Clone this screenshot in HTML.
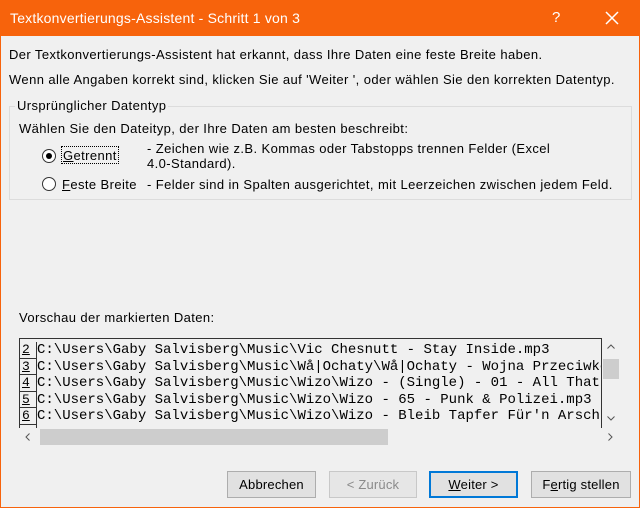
<!DOCTYPE html>
<html><head><meta charset="utf-8"><style>
*{margin:0;padding:0;box-sizing:border-box}
body{width:640px;height:508px;overflow:hidden;background:#f0f0f0;font-family:"Liberation Sans",sans-serif;font-size:13px;letter-spacing:.4px;color:#000;position:relative}
.frame{position:absolute;left:0;top:0;width:640px;height:508px;border:1px solid #f7630c;border-top:none}
.title{position:absolute;left:0;top:0;width:640px;height:36px;background:#f7630c;color:#fff;font-size:14px;letter-spacing:.2px}
.title .t{position:absolute;left:10px;top:10px}
.title .q{position:absolute;left:552px;top:9px;font-size:15px}
.a{position:absolute;white-space:nowrap}
.group{position:absolute;left:9px;top:106px;width:623px;height:94px;border:1px solid #dcdcdc}
.leg{position:absolute;left:15px;top:98px;background:#f0f0f0;padding:0 2px}
.radio{position:absolute;width:14px;height:14px;border:1px solid #333;border-radius:50%;background:#fff}
.radio.on::after{content:"";position:absolute;left:3px;top:3px;width:6px;height:6px;border-radius:50%;background:#000}
.prev{position:absolute;left:19px;top:338px;width:583px;height:90px;border:1px solid #333;border-bottom:none;overflow:hidden;background:#f0f0f0;letter-spacing:0}
.row{height:16.5px;position:relative;font-family:"Liberation Mono",monospace;font-size:14px;line-height:16px;white-space:nowrap}
.row .n{position:absolute;left:0;top:0;width:17px;height:16.5px;border-right:1px solid #333;border-bottom:1px solid #333;padding-left:2px;text-decoration:underline;font-size:13px}
.row .c{position:absolute;left:17px;top:0}
.vs{position:absolute;left:602px;top:338px;width:18px;height:90px;background:#f0f0f0}
.hs{position:absolute;left:19px;top:428px;width:601px;height:18px;background:#f0f0f0}
.btn{position:absolute;top:471px;height:27px;border:1px solid #adadad;background:#e1e1e1;text-align:center;line-height:25px;font-size:13px;letter-spacing:.2px}
</style></head><body>
<div class="title"><span class="t">Textkonvertierungs-Assistent - Schritt 1 von 3</span><span class="q">?</span>
<svg style="position:absolute;left:605px;top:11px" width="14" height="14"><path d="M1 1L13 13M13 1L1 13" stroke="#fff" stroke-width="1.5"/></svg></div>
<div class="frame"></div>
<div class="a" style="left:9px;top:47px">Der Textkonvertierungs-Assistent hat erkannt, dass Ihre Daten eine feste Breite haben.</div>
<div class="a" style="left:9px;top:72px">Wenn alle Angaben korrekt sind, klicken Sie auf 'Weiter ', oder wählen Sie den korrekten Datentyp.</div>
<div class="group"></div>
<div class="a leg">Ursprünglicher Datentyp</div>
<div class="a" style="left:19px;top:121px">Wählen Sie den Dateityp, der Ihre Daten am besten beschreibt:</div>
<div class="radio on" style="left:42px;top:149px"></div>
<div class="a" style="left:61px;top:146px;height:18px;border:1px dotted #000;padding:1px 1px"><u>G</u>etrennt</div>
<div class="a" style="left:147px;top:141px">- Zeichen wie z.B. Kommas oder Tabstopps trennen Felder (Excel</div>
<div class="a" style="left:147px;top:156px">4.0-Standard).</div>
<div class="radio" style="left:42px;top:177px"></div>
<div class="a" style="left:62px;top:177px"><u>F</u>este Breite</div>
<div class="a" style="left:147px;top:177px">- Felder sind in Spalten ausgerichtet, mit Leerzeichen zwischen jedem Feld.</div>
<div class="a" style="left:19px;top:310px">Vorschau der markierten Daten:</div>
<div class="prev">
<div class="row" style="margin-top:3px"><span class="n">2</span><span class="c">C:\Users\Gaby Salvisberg\Music\Vic Chesnutt - Stay Inside.mp3</span></div>
<div class="row"><span class="n">3</span><span class="c">C:\Users\Gaby Salvisberg\Music\Wå|Ochaty\Wå|Ochaty - Wojna Przeciwko</span></div>
<div class="row"><span class="n">4</span><span class="c">C:\Users\Gaby Salvisberg\Music\Wizo\Wizo - (Single) - 01 - All That</span></div>
<div class="row"><span class="n">5</span><span class="c">C:\Users\Gaby Salvisberg\Music\Wizo\Wizo - 65 - Punk &amp; Polizei.mp3</span></div>
<div class="row"><span class="n">6</span><span class="c">C:\Users\Gaby Salvisberg\Music\Wizo\Wizo - Bleib Tapfer  Für'n Arsch</span></div>
<div class="row"><span class="n"></span></div>
</div>
<div class="vs"><svg style="position:absolute;left:5px;top:6px" width="8" height="5"><path d="M0.5 4.5L4 1L7.5 4.5" stroke="#555" fill="none"/></svg><div style="position:absolute;left:1px;top:21px;width:16px;height:20px;background:#cdcdcd"></div><svg style="position:absolute;left:5px;top:78px" width="8" height="5"><path d="M0.5 0.5L4 4L7.5 0.5" stroke="#555" fill="none"/></svg></div>
<div class="hs"><svg style="position:absolute;left:6px;top:5px" width="5" height="8"><path d="M4.5 0.5L1 4L4.5 7.5" stroke="#555" fill="none"/></svg><div style="position:absolute;left:21px;top:1px;width:348px;height:16px;background:#cdcdcd"></div><svg style="position:absolute;left:589px;top:5px" width="5" height="8"><path d="M0.5 0.5L4 4L0.5 7.5" stroke="#555" fill="none"/></svg></div>
<div class="btn" style="left:227px;width:89px">Abbrechen</div>
<div class="btn" style="left:329px;width:88px;color:#8a8a8a;border-color:#c8c8c8;background:#e6e6e6">&lt; Zurück</div>
<div class="btn" style="left:429px;width:89px;border:2px solid #0078d7;line-height:23px"><u>W</u>eiter &gt;</div>
<div class="btn" style="left:531px;width:100px">F<u>e</u>rtig stellen</div>
</body></html>
